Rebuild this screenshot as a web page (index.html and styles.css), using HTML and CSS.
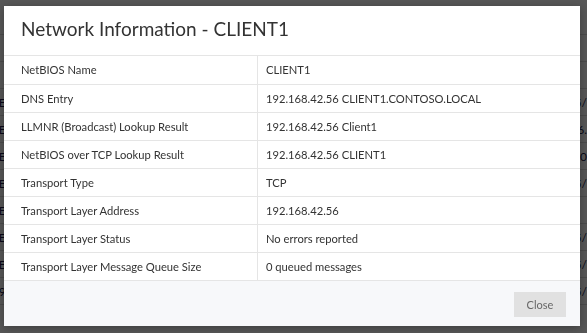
FILE: index.html
```html
<!DOCTYPE html>
<html lang="en">
<head>
    <meta charset="UTF-8">
    <title>Network Information</title>
    <link rel="stylesheet" href="styles.css">
</head>
<body>

<div class="page">
    <div class="pageRow"><span class="colA">NAME</span><span class="colB"></span><span class="colC">Status</span></div>
    <div class="pageRow"><span class="colA">F</span><span class="colB"></span><span class="colC">.</span></div>
    <div class="pageRow"><span class="colA"></span><span class="colB"></span><span class="colC"></span></div>
    <div class="pageRow"><span class="colA">CLIENTE</span><span class="colB"></span><span class="colC">Image Backup at 05/</span></div>
    <div class="pageRow"><span class="colA">CLIENTE</span><span class="colB"></span><span class="colC">Image Backup at 06.</span></div>
    <div class="pageRow"><span class="colA">CLIENTE</span><span class="colB"></span><span class="colC">Image Backup at 20</span></div>
    <div class="pageRow"><span class="colA">CLIENTE</span><span class="colB"></span><span class="colC">Image Backup at 05/</span></div>
    <div class="pageRow"><span class="colA">CLIENTE</span><span class="colB"></span><span class="colC"></span></div>
    <div class="pageRow"><span class="colA">CLIENTE</span><span class="colB"></span><span class="colC">Image Backup at 05/</span></div>
    <div class="pageRow"><span class="colA">CLIENTE</span><span class="colB"></span><span class="colC">Image Backup at 05/</span></div>
    <div class="pageRow"><span class="colA">CLIENT9</span><span class="colB">&#10003; Connected</span><span class="colC">Image Backup at 05/</span></div>
</div>
<div class="overlay"></div>

<div class="modal">
    <div class="modalHeader">Network Information - CLIENT1</div>
    <table class="infoTable">
        <tbody>
            <tr><th>NetBIOS Name</th><td>CLIENT1</td></tr>
            <tr><th>DNS Entry</th><td>192.168.42.56 CLIENT1.CONTOSO.LOCAL</td></tr>
            <tr><th>LLMNR (Broadcast) Lookup Result</th><td>192.168.42.56 Client1</td></tr>
            <tr><th>NetBIOS over TCP Lookup Result</th><td>192.168.42.56 CLIENT1</td></tr>
            <tr><th>Transport Type</th><td>TCP</td></tr>
            <tr><th>Transport Layer Address</th><td>192.168.42.56</td></tr>
            <tr><th>Transport Layer Status</th><td>No errors reported</td></tr>
            <tr><th>Transport Layer Message Queue Size</th><td>0 queued messages</td></tr>
        </tbody>
    </table>
    <div class="modalFooter">
        <button class="closeButton">Close</button>
    </div>
</div>

</body>
</html>
```
FILE: styles.css
```css
body {
    margin: 0;
    font-family: Lato, "Open Sans", sans-serif;
    background: #fff;
    overflow: hidden;
}

.page {
    padding-top: 8px;
}

.pageRow {
    display: flex;
    height: 26px;
    align-items: center;
    border-bottom: 1px solid #ddd;
    font-size: 12px;
    color: #1a1a4a;
}

.colA {
    width: 290px;
    margin-left: -42px;
}

.colB {
    width: 270px;
}

.colC {
    white-space: nowrap;
    margin-left: 18px;
}

.overlay {
    position: fixed;
    inset: 0;
    background: rgba(0, 0, 0, 0.66);
}

.modal {
    position: absolute;
    left: 4px;
    top: 6px;
    width: 576px;
    background: #fff;
    box-shadow: 0 2px 8px rgba(0, 0, 0, 0.3);
}

.modalHeader {
    height: 50px;
    padding: 11px 0 0 17px;
    box-sizing: border-box;
    font-size: 19px;
    color: #333;
    border-bottom: 1px solid #e5e5e5;
}

.infoTable {
    width: 100%;
    table-layout: fixed;
    border-collapse: collapse;
    font-size: 11.2px;
    color: #333;
}

.infoTable tr {
    height: 28px;
}

.infoTable th, .infoTable td {
    padding: 0 8px;
    text-align: left;
    font-weight: normal;
    border-bottom: 1px solid #e5e5e5;
}

.infoTable th {
    width: 228px;
    padding-left: 17px;
    border-right: 1px solid #e5e5e5;
}

.modalFooter {
    height: 45px;
    display: flex;
    justify-content: flex-end;
    align-items: flex-start;
    padding: 11px 14px 0 0;
    box-sizing: border-box;
    background: #f7f8fa;
}

.closeButton {
    width: 52px;
    height: 25px;
    border: none;
    background: #e1e1e1;
    color: #666;
    font-family: Lato, sans-serif;
    font-size: 11px;
}
```
